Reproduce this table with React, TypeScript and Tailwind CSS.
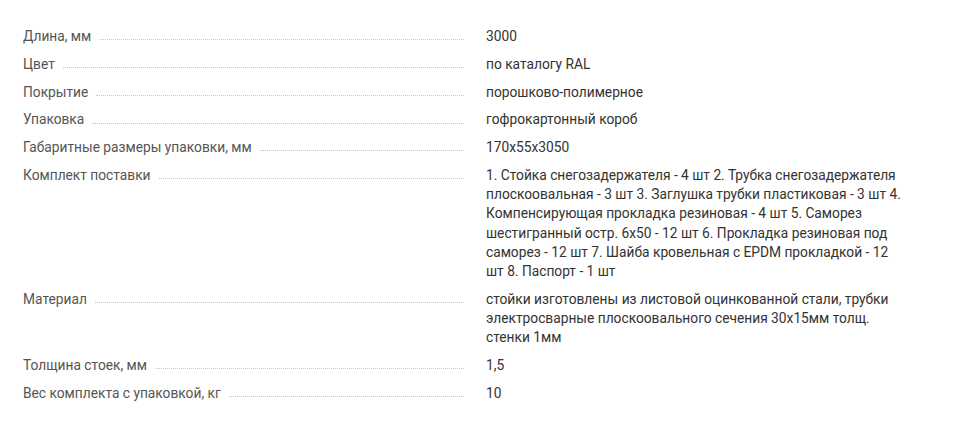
const specs: { label: string; value: string }[] = [
  { label: 'Длина, мм', value: '3000' },
  { label: 'Цвет', value: 'по каталогу RAL' },
  { label: 'Покрытие', value: 'порошково-полимерное' },
  { label: 'Упаковка', value: 'гофрокартонный короб' },
  { label: 'Габаритные размеры упаковки, мм', value: '170x55x3050' },
  {
    label: 'Комплект поставки',
    value:
      '1. Стойка снегозадержателя - 4 шт 2. Трубка снегозадержателя плоскоовальная - 3 шт 3. Заглушка трубки пластиковая - 3 шт 4. Компенсирующая прокладка резиновая - 4 шт 5. Саморез шестигранный остр. 6x50 - 12 шт 6. Прокладка резиновая под саморез - 12 шт 7. Шайба кровельная с EPDM прокладкой - 12 шт 8. Паспорт - 1 шт',
  },
  {
    label: 'Материал',
    value:
      'стойки изготовлены из листовой оцинкованной стали, трубки электросварные плоскоовального сечения 30x15мм толщ. стенки 1мм',
  },
  { label: 'Толщина стоек, мм', value: '1,5' },
  { label: 'Вес комплекта с упаковкой, кг', value: '10' },
];

export default function App() {
  return (
    <div
      className="min-h-[428px] bg-white pt-[27px] pl-[23px] text-[13.75px] leading-[19.25px]"
      style={{ fontFamily: 'Roboto, "Noto Sans", sans-serif' }}
    >
      <div className="flex flex-col gap-[8.5px]">
        {specs.map((row) => (
          <div key={row.label} className="flex items-start">
            <div className="flex h-[19.25px] w-[441px] shrink-0 items-end">
              <span className="whitespace-nowrap text-[#555]">{row.label}</span>
              <span className="mb-[6px] ml-2 flex-1 border-b border-dotted border-[#c8c8c8]" />
            </div>
            <div className="ml-[22px] w-[419px] text-[#333]">{row.value}</div>
          </div>
        ))}
      </div>
    </div>
  );
}
